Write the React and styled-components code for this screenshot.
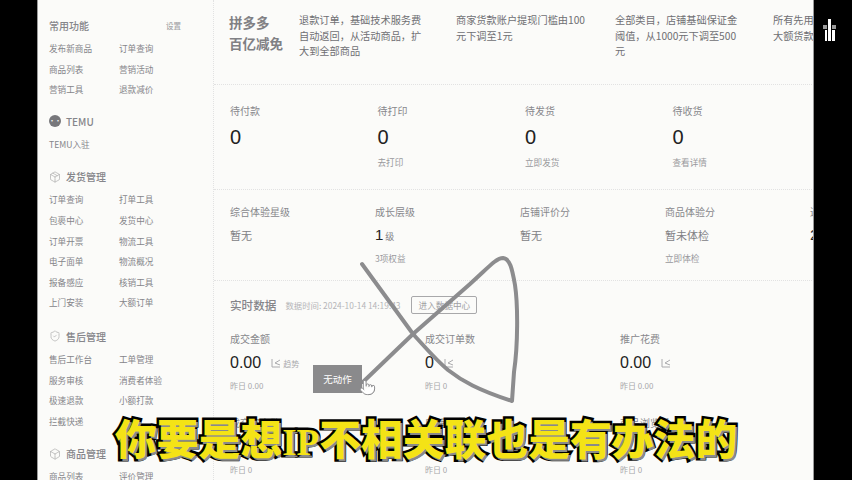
import styled, { createGlobalStyle } from "styled-components";
import { Box, Package, Pointer, ShieldCheck } from "lucide-react";

const GlobalStyle = createGlobalStyle`
  html, body { margin: 0; padding: 0; background: #000; }
  body { font-family: "Noto Sans CJK SC", "Noto Sans", sans-serif; }
`;

const Screen = styled.div`
  position: relative;
  display: flex;
  width: 852px;
  height: 480px;
  overflow: hidden;
  background: #000;
`;

const SideBar = styled.div`
  flex: none;
  width: ${(p) => p.$w}px;
  background: #000;
`;

const Page = styled.div`
  flex: none;
  display: flex;
  width: 777px;
  height: 480px;
  overflow: hidden;
  background: #fbfbf9;
  border-left: 1px solid #9a9a9a;
  border-right: 1px solid #9a9a9a;
  box-sizing: border-box;
`;

const Nav = styled.nav`
  flex: none;
  box-sizing: border-box;
  width: 176px;
  height: 480px;
  padding: 17px 0 0 11px;
  border-right: 1px dotted #e2e2e2;
  color: #85858a;
`;

const NavGroup = styled.section`
  margin-bottom: ${(p) => p.$gap}px;
`;

const NavHead = styled.div`
  display: flex;
  align-items: center;
  gap: 5px;
  width: 132px;
  height: 17px;
  margin-bottom: 4px;
  font-size: 10px;
  line-height: 17px;
  font-weight: 500;
  color: #85858a;

  small {
    margin-left: auto;
    font-size: 7.5px;
    color: #a5a5a8;
  }
`;

const NavGrid = styled.div`
  display: grid;
  grid-template-columns: 70px 70px;
  grid-auto-rows: 20.6px;
  font-size: 8.6px;
  line-height: 20.6px;
  white-space: nowrap;
`;

const TemuMark = styled.span`
  display: flex;
  align-items: center;
  justify-content: center;
  width: 12px;
  height: 12px;
  border-radius: 50%;
  background: #77777b;
  color: #fff;
  font-size: 6px;
  line-height: 12px;
`;

const Main = styled.main`
  flex: 1;
  min-width: 0;
  overflow: hidden;
`;

const Banner = styled.div`
  display: grid;
  grid-template-columns: 70px 157px 159px 158px 160px;
  box-sizing: border-box;
  height: 85px;
  padding: 12px 0 0 15px;
  border-bottom: 1px dotted #e2e2e2;
  width: 720px;
`;

const BannerTitle = styled.h2`
  margin: 0;
  font-size: 13.5px;
  line-height: 21px;
  font-weight: 700;
  color: #808084;
`;

const BannerText = styled.p`
  margin: 0;
  width: ${(p) => p.$w}px;
  font-size: 10.2px;
  line-height: 15.6px;
  color: #6f6f73;
  overflow: hidden;
`;

const StatRow = styled.div`
  display: grid;
  grid-template-columns: repeat(${(p) => p.$cols}, ${(p) => p.$w}px);
  box-sizing: border-box;
  width: 760px;
  height: ${(p) => p.$h}px;
  padding: ${(p) => p.$top}px 0 0 16px;
  border-bottom: 1px dotted #e2e2e2;
`;

const Stat = styled.div`
  color: #808084;
`;

const StatLabel = styled.div`
  height: 16px;
  font-size: 10px;
  line-height: 16px;
  color: #88888c;
  white-space: nowrap;
`;

const StatNumber = styled.div`
  height: 30px;
  margin-top: 3px;
  font-family: "Liberation Sans", sans-serif;
  font-size: 20px;
  line-height: 30px;
  color: #222;
`;

const StatHint = styled.div`
  margin-top: ${(p) => p.$top}px;
  font-size: 8.6px;
  line-height: 12px;
  color: #98989c;
  white-space: nowrap;
`;

const ScoreValue = styled.div`
  height: 18px;
  margin-top: 6px;
  font-size: 11px;
  line-height: 18px;
  color: #808084;
  white-space: nowrap;

  b {
    font-family: "Liberation Sans", sans-serif;
    font-size: 15px;
    font-weight: 400;
    color: #222;
  }

  small {
    margin-left: 2px;
    font-size: 9px;
  }
`;

const LiveHead = styled.div`
  display: flex;
  align-items: center;
  box-sizing: border-box;
  height: 34px;
  margin-top: 7px;
  padding-left: 16px;
`;

const LiveTitle = styled.h3`
  margin: 0;
  font-size: 11.6px;
  font-weight: 500;
  color: #85858a;
`;

const LiveNote = styled.span`
  margin-left: 9px;
  width: 117px;
  font-size: 8.4px;
  color: #b5b5b8;
  white-space: nowrap;
`;

const LiveButton = styled.button`
  flex: none;
  box-sizing: border-box;
  width: 66px;
  height: 18px;
  margin-left: 9px;
  padding: 0;
  border: 1px solid #a8a8aa;
  border-radius: 2px;
  background: transparent;
  font-family: inherit;
  font-size: 8.6px;
  line-height: 16px;
  color: #a0a0a3;
`;

const LiveGrid = styled.div`
  display: grid;
  grid-template-columns: repeat(3, 195px);
  grid-auto-rows: 84px;
  padding: 9px 0 0 16px;
`;

const MoneyRow = styled.div`
  display: flex;
  align-items: center;
  gap: 10px;
  height: 24px;
  margin-top: 4px;
  font-family: "Liberation Sans", sans-serif;
  font-size: 16px;
  color: #222;

  span {
    display: flex;
    align-items: center;
    gap: 2px;
    font-family: "Noto Sans CJK SC", sans-serif;
    font-size: 8px;
    color: #aaaaad;
  }
`;

const YesterdayNote = styled.div`
  margin-top: 5px;
  font-size: 8px;
  line-height: 12px;
  color: #a8a8ab;
`;

const Scribble = styled.svg`
  position: absolute;
  inset: 0;
  pointer-events: none;
`;

const ActionTip = styled.div`
  position: absolute;
  left: 313px;
  top: 365px;
  width: 49px;
  height: 28px;
  background: #8a8a8c;
  color: #fff;
  font-size: 9.5px;
  line-height: 28px;
  text-align: center;
`;

const HandCursor = styled.div`
  position: absolute;
  left: 359px;
  top: 379px;
  line-height: 0;
`;

const Logo = styled.svg`
  position: absolute;
  left: 820px;
  top: 16px;
`;

const Caption = styled.div`
  position: absolute;
  left: 115px;
  top: 415px;
  font-family: "Noto Sans CJK SC", sans-serif;
  font-size: 41.8px;
  line-height: 44px;
  font-weight: 900;
  white-space: nowrap;
  color: #f4e316;
  -webkit-text-stroke: 5px #000;
  paint-order: stroke fill;
  text-shadow: 2px 2px 0 #8a8a8a;

  em {
    font-family: "Liberation Serif", serif;
    font-style: normal;
    font-size: 37px;
    font-weight: 700;
  }
`;

const navGroups = [
  {
    gap: 13,
    title: "常用功能",
    extra: "设置",
    items: ["发布新商品", "订单查询", "商品列表", "营销活动", "营销工具", "退款减价"],
  },
  {
    gap: 14,
    title: "TEMU",
    icon: <TemuMark>••</TemuMark>,
    items: ["TEMU入驻"],
  },
  {
    gap: 15,
    title: "发货管理",
    icon: <Package size={12} strokeWidth={1} strokeDasharray="2 1" color="#999" />,
    items: ["订单查询", "打单工具", "包裹中心", "发货中心", "订单开票", "物流工具", "电子面单", "物流概况", "报备感应", "核销工具", "上门安装", "大额订单"],
  },
  {
    gap: 14,
    title: "售后管理",
    icon: <ShieldCheck size={12} strokeWidth={1} strokeDasharray="2 1" color="#999" />,
    items: ["售后工作台", "工单管理", "服务审核", "消费者体验", "极速退款", "小额打款", "拦截快递"],
  },
  {
    gap: 0,
    title: "商品管理",
    icon: <Box size={12} strokeWidth={1} strokeDasharray="2 1" color="#999" />,
    items: ["商品列表", "评价管理"],
  },
];

const bannerTexts = [
  ["退款订单，基础技术服务费自动返回，从活动商品，扩大到全部商品", 126],
  ["商家货款账户提现门槛由100元下调至1元", 135],
  ["全部类目，店铺基础保证金阈值，从1000元下调至500元", 126],
  ["所有先用后付类目全覆盖，大额货款", 126],
];

const orderStats = [
  ["待付款", "0", ""],
  ["待打印", "0", "去打印"],
  ["待发货", "0", "立即发货"],
  ["待收货", "0", "查看详情"],
];

const scores = [
  ["综合体验星级", "暂无", ""],
  ["成长层级", <><b>1</b><small>级</small></>, "3项权益"],
  ["店铺评价分", "暂无", ""],
  ["商品体验分", "暂未体检", "立即体检"],
  ["返现", <b>2</b>, ""],
];

const liveStats = [
  ["成交金额", "0.00", "趋势", "昨日 0.00"],
  ["成交订单数", "0", "", "昨日 0"],
  ["推广花费", "0.00", "", "昨日 0.00"],
  ["成交买家数", "0", "", "昨日 0"],
  ["店铺访客数", "0", "", "昨日 0"],
  ["商品浏览量", "0", "", "昨日 0"],
];

const TrendIcon = () => (
  <svg width="10" height="10" viewBox="0 0 10 10" fill="none" stroke="#aaaaad">
    <path d="M1 1V9H9M9 2L4 5L9 7" />
  </svg>
);

export default function App() {
  return (
    <Screen>
      <GlobalStyle />
      <SideBar $w={37} />
      <Page>
        <Nav>
          {navGroups.map((group) => (
            <NavGroup key={group.title} $gap={group.gap}>
              <NavHead>
                {group.icon}
                {group.title}
                {group.extra && <small>{group.extra}</small>}
              </NavHead>
              <NavGrid>
                {group.items.map((item, i) => (
                  <span key={i}>{item}</span>
                ))}
              </NavGrid>
            </NavGroup>
          ))}
        </Nav>
        <Main>
          <Banner>
            <BannerTitle>拼多多<br />百亿减免</BannerTitle>
            {bannerTexts.map(([text, w]) => (
              <BannerText key={text} $w={w}>{text}</BannerText>
            ))}
          </Banner>
          <StatRow $cols={4} $w={147.5} $h={105} $top={18}>
            {orderStats.map(([label, num, hint]) => (
              <Stat key={label}>
                <StatLabel>{label}</StatLabel>
                <StatNumber>{num}</StatNumber>
                {hint && <StatHint $top={4}>{hint}</StatHint>}
              </Stat>
            ))}
          </StatRow>
          <StatRow $cols={5} $w={145} $h={91} $top={14}>
            {scores.map(([label, value, hint]) => (
              <Stat key={label}>
                <StatLabel>{label}</StatLabel>
                <ScoreValue>{value}</ScoreValue>
                {hint && <StatHint $top={8}>{hint}</StatHint>}
              </Stat>
            ))}
          </StatRow>
          <LiveHead>
            <LiveTitle>实时数据</LiveTitle>
            <LiveNote>数据时间: 2024-10-14 14:19:43</LiveNote>
            <LiveButton>进入数据中心</LiveButton>
          </LiveHead>
          <LiveGrid>
            {liveStats.map(([label, money, trend, note]) => (
              <Stat key={label}>
                <StatLabel>{label}</StatLabel>
                <MoneyRow>
                  {money}
                  <span><TrendIcon />{trend}</span>
                </MoneyRow>
                <YesterdayNote>{note}</YesterdayNote>
              </Stat>
            ))}
          </LiveGrid>
        </Main>
      </Page>
      <SideBar $w={38} />

      <Scribble width="852" height="480" viewBox="0 0 852 480" fill="none">
        <path
          d="M362 264L413 334C425 347 436 360 448 370C462 381 478 390 512 401L514 372C518 345 518 305 515 285C512 268 510 259 503 258C496 258 488 268 470 284L413 334L363 382"
          stroke="#8c8c8e"
          strokeWidth="4"
          strokeLinecap="round"
          strokeLinejoin="round"
        />
      </Scribble>
      <ActionTip>无动作</ActionTip>
      <HandCursor>
        <Pointer size={17} color="#8a8a8c" fill="#fff" strokeWidth={1.4} />
      </HandCursor>
      <Logo width="18" height="28" viewBox="0 0 18 28">
        <rect x="3" y="9" width="4" height="4" fill="#9a9a9a" />
        <rect x="5" y="14" width="2" height="11" fill="#fff" />
        <rect x="8" y="3" width="3" height="22" fill="#fff" />
        <rect x="12" y="9" width="4" height="4" fill="#9a9a9a" />
        <rect x="12" y="14" width="3" height="11" fill="#fff" />
      </Logo>
      <Caption>你要是想<em>IP</em>不相关联也是有办法的</Caption>
    </Screen>
  );
}
